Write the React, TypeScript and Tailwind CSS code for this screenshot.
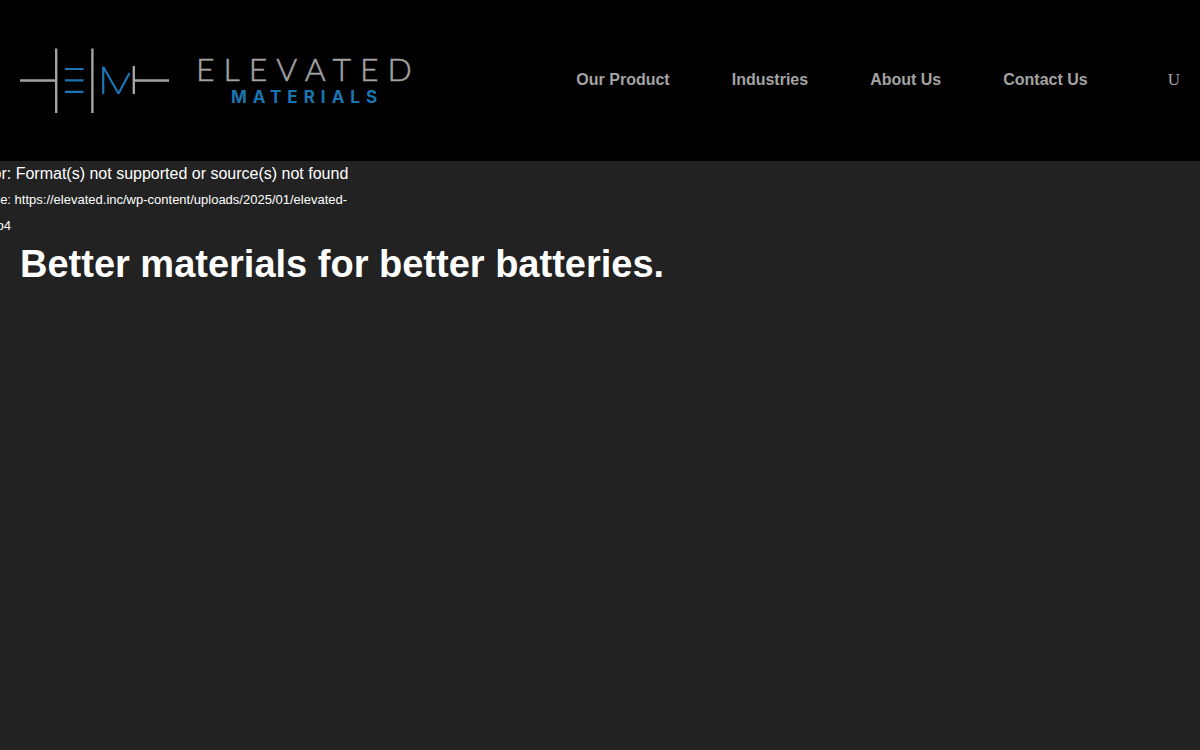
const navItems = [
  { label: "Our Product", href: "#product" },
  { label: "Industries", href: "#industries" },
  { label: "About Us", href: "#about" },
  { label: "Contact Us", href: "#contact" },
];

function Logo() {
  return (
    <svg viewBox="0 0 410 66" className="h-[66px] w-[410px] shrink-0" role="img" aria-label="Elevated Materials">
      <g fill="none" stroke="#a3a3a3" strokeWidth="2.4">
        <path d="M0 32.5H36M36.2 0.5V65M72.4 0.5V65" />
        <path d="M113.8 18V46M114 32.5H149" />
      </g>
      <g fill="none" stroke="#1b75b3" strokeWidth="2.2" strokeLinejoin="bevel">
        <path d="M45 21H63.5M45 32.4H63.5M45 43.8H63.5" />
        <path d="M83.2 46V18.8L98.5 45.5L109.5 25" />
      </g>
      <text
        x="176"
        y="33"
        strokeWidth="0.5"
        className="fill-[#a3a3a3] stroke-[#a3a3a3] font-['Lato',sans-serif] text-[32px] font-light tracking-[9px]"
      >
        ELEVATED
      </text>
      <text x="211" y="55" className="fill-[#1b75b3] font-['Inter',sans-serif] text-[17px] font-bold tracking-[6px]">
        MATERIALS
      </text>
    </svg>
  );
}

function Header() {
  return (
    <header className="flex min-h-[161px] items-center justify-between bg-black px-5">
      <a href="#home">
        <Logo />
      </a>
      <div className="flex items-center gap-20 pb-0.5">
        <nav className="flex gap-[62px]">
          {navItems.map((item) => (
            <a key={item.label} href={item.href} className="whitespace-nowrap text-base font-bold text-[#a3a3a3]">
              {item.label}
            </a>
          ))}
        </nav>
        <button
          type="button"
          aria-label="Search"
          className="font-['Liberation_Serif',serif] text-[17px] leading-6 text-[#a3a3a3]"
        >
          U
        </button>
      </div>
    </header>
  );
}

function VideoError() {
  return (
    <div className="-ml-[75px] w-[440px] text-white">
      <p className="text-base leading-[26px]">Media error: Format(s) not supported or source(s) not found</p>
      <a href="#download" className="block text-[13px] leading-[26px]">
        Download File: https://elevated.inc/wp-content/uploads/2025/01/elevated-
        <br />
        reel-video.mp4
      </a>
    </div>
  );
}

export default function App() {
  return (
    <div className="flex min-h-screen flex-col overflow-hidden bg-[#222222] font-['Liberation_Sans',Arial,sans-serif]">
      <Header />
      <main className="flex-1">
        <VideoError />
        <h1 className="px-5 text-[38px] leading-[50px] font-bold text-white">
          Better materials for better batteries.
        </h1>
      </main>
    </div>
  );
}
